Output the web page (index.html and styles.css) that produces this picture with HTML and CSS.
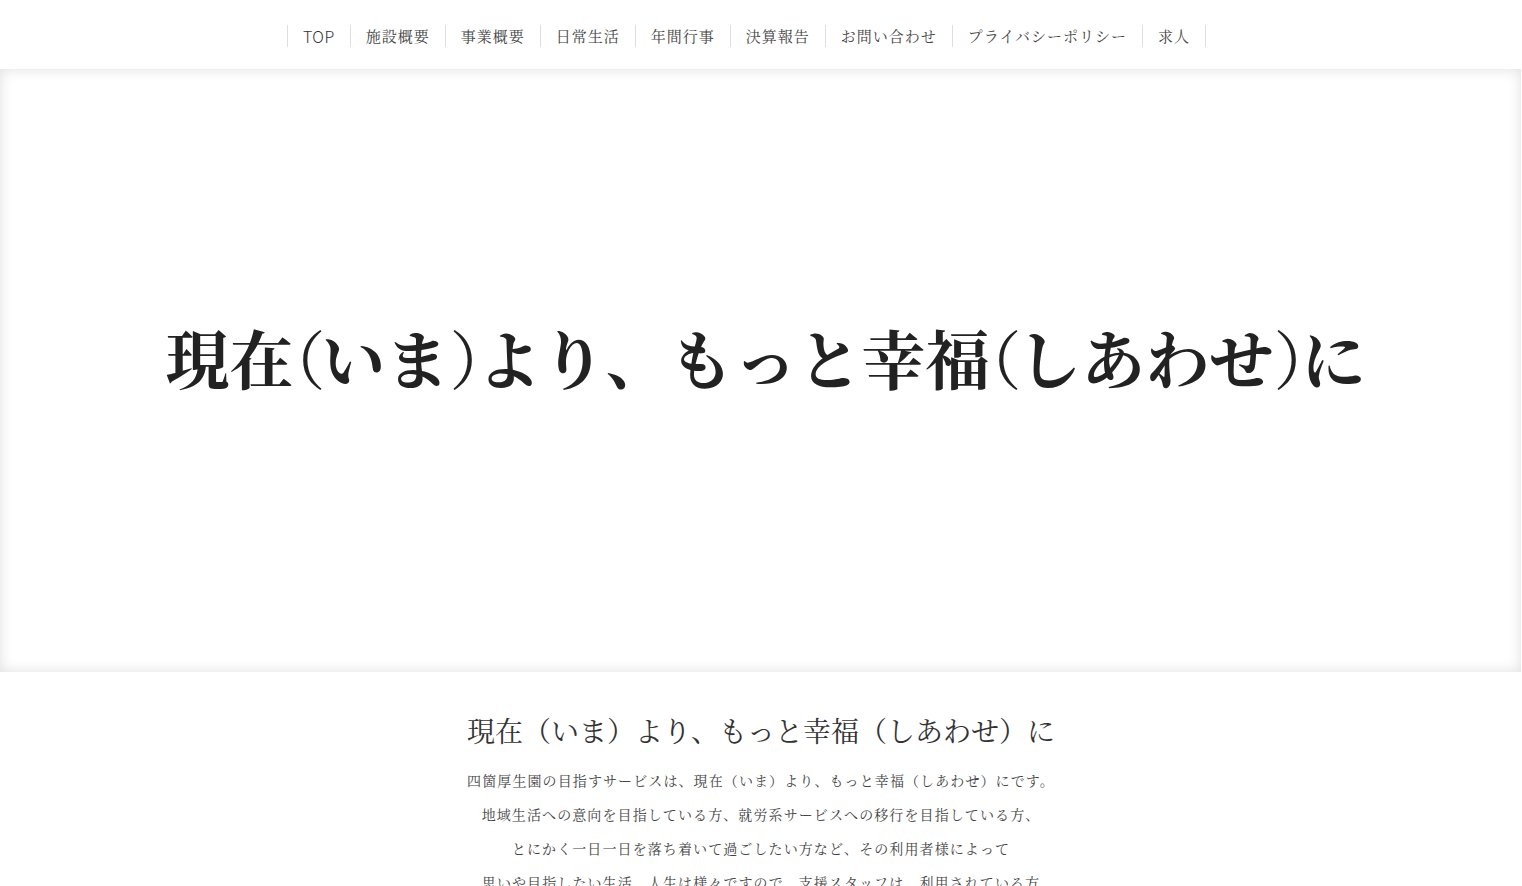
FILE: index.html
```html
<!DOCTYPE html>
<html lang="ja">
<head>
<meta charset="utf-8">
<title>四箇厚生園</title>
<link rel="stylesheet" href="styles.css">
</head>
<body>
<header class="site-header">
  <nav class="gnav">
    <a class="gnav-item gnav-latin" href="#">TOP</a>
    <a class="gnav-item" href="#">施設概要</a>
    <a class="gnav-item" href="#">事業概要</a>
    <a class="gnav-item" href="#">日常生活</a>
    <a class="gnav-item" href="#">年間行事</a>
    <a class="gnav-item" href="#">決算報告</a>
    <a class="gnav-item" href="#">お問い合わせ</a>
    <a class="gnav-item" href="#">プライバシーポリシー</a>
    <a class="gnav-item gnav-last" href="#">求人</a>
  </nav>
</header>
<section class="hero">
  <h1 class="hero-title">現在<span class="paren">（</span>いま<span class="paren">）</span>より、もっと幸福<span class="paren">（</span>しあわせ<span class="paren">）</span>に</h1>
</section>
<main class="intro">
  <h2 class="intro-title">現在（いま）より、もっと幸福（しあわせ）に</h2>
  <p class="intro-text">四箇厚生園の目指すサービスは、現在（いま）より、もっと幸福（しあわせ）にです。<br>地域生活への意向を目指している方、就労系サービスへの移行を目指している方、<br>とにかく一日一日を落ち着いて過ごしたい方など、その利用者様によって<br>思いや目指したい生活、人生は様々ですので、支援スタッフは、利用されている方</p>
</main>
</body>
</html>
```

FILE: styles.css
```css
html, body {
  margin: 0;
  padding: 0;
  background: #fff;
}
body {
  font-family: "Noto Serif CJK JP", "Liberation Serif", "Noto Sans CJK JP", serif;
  color: #333;
}
.site-header {
  height: 69px;
  box-sizing: border-box;
  padding: 25px 29px 0 0;
  background: #fff;
}
.gnav {
  display: flex;
  justify-content: center;
}
.gnav-item {
  display: block;
  height: 22px;
  line-height: 22px;
  padding: 0 15px;
  font-size: 15px;
  letter-spacing: 1px;
  color: #444;
  text-decoration: none;
  border-left: 1px solid #dedede;
}
.gnav-latin {
  font-family: "Noto Sans CJK JP", "Liberation Sans", sans-serif;
  font-weight: 300;
  font-size: 16px;
  letter-spacing: 0.5px;
  color: #333;
}
.gnav-last {
  border-right: 1px solid #dedede;
}
.hero {
  height: 603px;
  width: calc(100% - 1px);
  box-shadow: inset 0 0 14px rgba(0, 0, 0, 0.13);
  display: flex;
  align-items: center;
  justify-content: center;
  box-sizing: border-box;
  padding: 0 0 28px 10px;
}
.hero-title {
  margin: 0;
  font-size: 64px;
  font-weight: bold;
  color: #222;
  line-height: 1.2;
  white-space: nowrap;
}
.paren {
  font-weight: normal;
  font-feature-settings: "halt";
  letter-spacing: -4px;
}
.intro {
  text-align: center;
  padding-top: 37px;
}
.intro-title {
  margin: 0;
  font-size: 28px;
  font-weight: normal;
  line-height: 42px;
  color: #333;
}
.intro-text {
  margin: 12px 0 0;
  font-size: 14px;
  line-height: 34px;
  letter-spacing: 1.1px;
  color: #444;
}
```
